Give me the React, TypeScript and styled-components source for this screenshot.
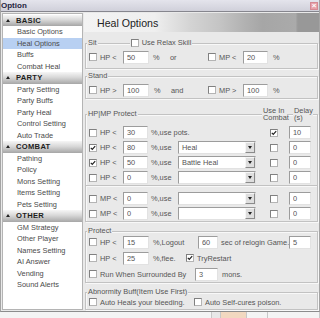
import React from "react";
import styled, { createGlobalStyle } from "styled-components";

const nav = [
  { title: "BASIC", items: ["Basic Options", "Heal Options", "Buffs", "Combat Heal"] },
  { title: "PARTY", items: ["Party Setting", "Party Buffs", "Party Heal", "Control Setting", "Auto Trade"] },
  { title: "COMBAT", items: ["Pathing", "Policy", "Mons Setting", "Items Setting", "Pets Setting"] },
  { title: "OTHER", items: ["GM Strategy", "Other Player", "Names Setting", "AI Answer", "Vending", "Sound Alerts"] },
];

type ProtectRow = { stat: string; on: boolean; value: string; skill?: string; combat: boolean; delay: string };

const hpRows: ProtectRow[] = [
  { stat: "HP", on: false, value: "30", combat: true, delay: "10" },
  { stat: "HP", on: true, value: "80", skill: "Heal", combat: false, delay: "0" },
  { stat: "HP", on: true, value: "50", skill: "Battle Heal", combat: false, delay: "0" },
  { stat: "HP", on: false, value: "0", skill: "", combat: false, delay: "0" },
];

const mpRows: ProtectRow[] = [
  { stat: "MP", on: false, value: "0", skill: "", combat: false, delay: "0" },
  { stat: "MP", on: false, value: "0", skill: "", combat: false, delay: "0" },
];

const GlobalStyle = createGlobalStyle`
  html, body { margin: 0; padding: 0; background: #f6f6f6; }
  body {
    font-family: "Liberation Sans", Arial, sans-serif;
    font-size: 7.4px;
    color: #555;
  }
`;

const Window = styled.div`
  width: 320px;
  height: 312px;
  box-sizing: border-box;
  display: flex;
  flex-direction: column;
  background: #e9e9e9;
  border-left: 1px solid #a4a4a4;
  border-right: 1px solid #a4a4a4;
  border-bottom: 1px solid #8c8c8c;
`;

const TitleBar = styled.div`
  height: 11px;
  flex: none;
  display: flex;
  align-items: center;
  justify-content: space-between;
  padding: 0 1px 0 0;
  background: linear-gradient(#e4e4ec, #d0d0da);
  border-bottom: 1px solid #86868e;
  font-size: 8px;
  font-weight: bold;
  color: #262640;
`;

const Close = styled.span`
  width: 8px;
  height: 8px;
  box-sizing: border-box;
  display: flex;
  align-items: center;
  justify-content: center;
  background: #e8a2aa;
  border: 1px solid #d48a94;
  color: #fff;
  font-size: 8px;
  line-height: 1;
`;

const Body = styled.div`
  flex: 1;
  display: flex;
  gap: 1px;
  padding: 1px 0 1px 1px;
  min-height: 0;
`;

const Sidebar = styled.div`
  width: 81px;
  box-sizing: border-box;
  flex: none;
  background: #fff;
  border: 1px solid #b4b4b4;
  padding-top: 0.5px;
`;

const SectionHead = styled.div`
  height: 11.5px;
  display: flex;
  align-items: center;
  padding-left: 3px;
  background: linear-gradient(#f6f6f6, #d8d8d8 45%, #a6a6a6);
  font-weight: bold;
  font-size: 7.6px;
  letter-spacing: 0.3px;
  color: #1e1e1e;
`;

const Arrow = styled.span`
  width: 0;
  height: 0;
  border-left: 2.5px solid transparent;
  border-right: 2.5px solid transparent;
  border-bottom: 3px solid #222;
  margin-right: 6px;
`;

const NavItem = styled.div<{ $active?: boolean }>`
  height: 11.5px;
  line-height: 11.5px;
  padding-left: 14px;
  background: ${(p) => (p.$active ? "#b8d0f2" : "transparent")};
  color: #4a4a4a;
  white-space: nowrap;
`;

const Panel = styled.div`
  flex: 1;
  display: flex;
  flex-direction: column;
  min-width: 0;
`;

const PanelHeader = styled.div`
  height: 19px;
  flex: none;
  display: flex;
  align-items: center;
  padding-left: 13px;
  font-size: 10.6px;
  color: #222;
  background: linear-gradient(
    to right,
    #f3f3f3 0%,
    #efefef 30%,
    #d4d4d4 45%,
    #c4c4c4 58%,
    #b2b2b2 68%,
    #a6a6a6 76%,
    #aaaaaa 90%,
    #989898 91%,
    #989898 100%
  );
`;

const Group = styled.div<{ $mt: number; $pb?: number }>`
  margin: ${(p) => p.$mt}px 1px 0 1px;
  border: 1px solid #c2c2c2;
  box-shadow: inset 1px 1px 0 #f8f8f8, 1px 1px 0 #f8f8f8;
  padding: 0 4px ${(p) => p.$pb ?? 0}px 3px;
`;

const GroupHead = styled.div<{ $h: number }>`
  height: ${(p) => p.$h}px;
  margin-top: ${(p) => -(p.$h / 2 + 1)}px;
  display: flex;
  align-items: center;
`;

const HeadLabel = styled.span<{ $ml?: number | "auto"; $w?: number }>`
  background: #e9e9e9;
  padding: 0 1px;
  margin-left: ${(p) => (p.$ml === "auto" ? "auto" : `${p.$ml ?? 0}px`)};
  ${(p) => (p.$w ? `width: ${p.$w}px; box-sizing: border-box;` : "")}
  display: flex;
  align-items: center;
  gap: 3px;
  white-space: nowrap;
  line-height: 7.5px;
`;

const Row = styled.div<{ $h: number; $mt?: number }>`
  height: ${(p) => p.$h}px;
  margin-top: ${(p) => p.$mt ?? 0}px;
  display: flex;
  align-items: center;
`;

const Cell = styled.span<{ $w?: number; $pl?: number }>`
  flex: none;
  ${(p) => (p.$w ? `width: ${p.$w}px;` : "")}
  padding-left: ${(p) => p.$pl ?? 0}px;
  box-sizing: border-box;
  white-space: nowrap;
  display: flex;
  align-items: center;
`;

const Spacer = styled.div<{ $h: number }>`
  height: ${(p) => p.$h}px;
`;

const Separator = styled.div`
  height: 1px;
  margin: 0 -4px 5px -3px;
  background: #c2c2c2;
  box-shadow: 0 1px 0 #f8f8f8;
`;

const Box = styled.span`
  width: 8px;
  height: 8px;
  box-sizing: border-box;
  flex: none;
  display: flex;
  align-items: center;
  justify-content: center;
  border: 1px solid;
  border-color: #808080 #b4b4b4 #b4b4b4 #808080;
  background: #fff;
`;

const Field = styled.input<{ $w: number }>`
  width: ${(p) => p.$w}px;
  height: 13px;
  box-sizing: border-box;
  margin: 0;
  padding: 0 0 0 3px;
  border: 1px solid;
  border-color: #9c9c9c #e2e2e2 #e2e2e2 #9c9c9c;
  background: #fff;
  font: inherit;
  color: #555;
  outline: none;
`;

const Select = styled.div<{ $w: number }>`
  width: ${(p) => p.$w}px;
  height: 13px;
  box-sizing: border-box;
  display: flex;
  align-items: center;
  justify-content: space-between;
  padding: 0 0 0 3px;
  border: 1px solid;
  border-color: #9c9c9c #e2e2e2 #e2e2e2 #9c9c9c;
  background: #fff;
  color: #555;
`;

const DropBtn = styled.span`
  width: 10px;
  height: 11px;
  box-sizing: border-box;
  display: flex;
  align-items: center;
  justify-content: center;
  border: 1px solid;
  border-color: #f6f6f6 #8a8a8a #8a8a8a #f6f6f6;
  background: #dedede;
  &::after {
    content: "";
    border-left: 2.5px solid transparent;
    border-right: 2.5px solid transparent;
    border-top: 3px solid #222;
  }
`;

const ColHead = styled.span`
  display: flex;
  flex-direction: column;
`;

const Footer = styled.div`
  height: 6px;
  display: flex;
  background: #f4f4f4;
`;

const FooterBlock = styled.span<{ $w: number; $bg: string }>`
  width: ${(p) => p.$w}px;
  background: ${(p) => p.$bg};
  border-right: 1px solid #c8c8c8;
`;

function Check({ on }: { on?: boolean }) {
  return (
    <Box>
      {on && (
        <svg width="6" height="6" viewBox="0 0 6 6">
          <path d="M0.8 2.8 L2.3 4.4 L5.2 1.1" fill="none" stroke="#222" strokeWidth="1.2" />
        </svg>
      )}
    </Box>
  );
}

function ProtectLine({ row }: { row: ProtectRow }) {
  return (
    <Row $h={15}>
      <Cell $w={11}>
        <Check on={row.on} />
      </Cell>
      <Cell $w={23}>{row.stat} &lt;</Cell>
      <Cell $w={25}>
        <Field $w={25} readOnly value={row.value} />
      </Cell>
      {row.skill === undefined ? (
        <Cell $w={122} $pl={3}>
          %,use pots.
        </Cell>
      ) : (
        <>
          <Cell $w={30} $pl={3}>
            %,use
          </Cell>
          <Cell $w={92}>
            <Select $w={78}>
              <span>{row.skill}</span>
              <DropBtn />
            </Select>
          </Cell>
        </>
      )}
      <Cell $w={19}>
        <Check on={row.combat} />
      </Cell>
      <Cell $w={22}>
        <Field $w={22} readOnly value={row.delay} />
      </Cell>
    </Row>
  );
}

export default function App() {
  return (
    <>
      <GlobalStyle />
      <Window>
        <TitleBar>
          <span>Option</span>
          <Close>×</Close>
        </TitleBar>
        <Body>
          <Sidebar>
            {nav.map((section) => (
              <div key={section.title}>
                <SectionHead>
                  <Arrow />
                  {section.title}
                </SectionHead>
                {section.items.map((item) => (
                  <NavItem key={item} $active={item === "Heal Options"}>
                    {item}
                  </NavItem>
                ))}
              </div>
            ))}
          </Sidebar>
          <Panel>
            <PanelHeader>Heal Options</PanelHeader>

            <Group $mt={11} $pb={4}>
              <GroupHead $h={10}>
                <HeadLabel $ml={-2}>Sit</HeadLabel>
                <HeadLabel $ml={32}>
                  <Check />
                  Use Relax Skill
                </HeadLabel>
              </GroupHead>
              <Row $h={14} $mt={2}>
                <Cell $w={11}>
                  <Check />
                </Cell>
                <Cell $w={23}>HP &lt;</Cell>
                <Cell $w={26}>
                  <Field $w={26} readOnly value="50" />
                </Cell>
                <Cell $w={21} $pl={4}>
                  %
                </Cell>
                <Cell $w={38}>or</Cell>
                <Cell $w={11}>
                  <Check />
                </Cell>
                <Cell $w={24}>MP &lt;</Cell>
                <Cell $w={25}>
                  <Field $w={25} readOnly value="20" />
                </Cell>
                <Cell $pl={5}>%</Cell>
              </Row>
            </Group>

            <Group $mt={7} $pb={1}>
              <GroupHead $h={10}>
                <HeadLabel $ml={-2}>Stand</HeadLabel>
              </GroupHead>
              <Row $h={14} $mt={2}>
                <Cell $w={11}>
                  <Check />
                </Cell>
                <Cell $w={23}>HP &gt;</Cell>
                <Cell $w={26}>
                  <Field $w={26} readOnly value="100" />
                </Cell>
                <Cell $w={22} $pl={5}>
                  %
                </Cell>
                <Cell $w={37}>and</Cell>
                <Cell $w={11}>
                  <Check />
                </Cell>
                <Cell $w={24}>MP &gt;</Cell>
                <Cell $w={25}>
                  <Field $w={25} readOnly value="100" />
                </Cell>
                <Cell $pl={5}>%</Cell>
              </Row>
            </Group>

            <Group $mt={15}>
              <GroupHead $h={16}>
                <HeadLabel $ml={-2}>HP|MP Protect</HeadLabel>
                <HeadLabel $ml="auto" $w={25}>
                  <ColHead>
                    <span>Use In</span>
                    <span>Combat</span>
                  </ColHead>
                </HeadLabel>
                <HeadLabel $ml={6} $w={20}>
                  <ColHead>
                    <span>Delay</span>
                    <span>(s)</span>
                  </ColHead>
                </HeadLabel>
              </GroupHead>
              <Spacer $h={3} />
              {hpRows.map((r, i) => (
                <ProtectLine key={i} row={r} />
              ))}
              <Separator />
              {mpRows.map((r, i) => (
                <ProtectLine key={i} row={r} />
              ))}
            </Group>

            <Group $mt={9}>
              <GroupHead $h={6}>
                <HeadLabel $ml={-2}>Protect</HeadLabel>
              </GroupHead>
              <Row $h={16}>
                <Cell $w={11}>
                  <Check />
                </Cell>
                <Cell $w={23}>HP &lt;</Cell>
                <Cell $w={26}>
                  <Field $w={26} readOnly value="15" />
                </Cell>
                <Cell $w={49} $pl={4}>
                  %,Logout
                </Cell>
                <Cell $w={20}>
                  <Field $w={20} readOnly value="60" />
                </Cell>
                <Cell $w={71} $pl={3}>
                  sec of relogin Game.
                </Cell>
                <Cell $w={22}>
                  <Field $w={22} readOnly value="5" />
                </Cell>
              </Row>
              <Row $h={16}>
                <Cell $w={11}>
                  <Check />
                </Cell>
                <Cell $w={23}>HP &lt;</Cell>
                <Cell $w={26}>
                  <Field $w={26} readOnly value="25" />
                </Cell>
                <Cell $w={37} $pl={4}>
                  %,flee.
                </Cell>
                <Cell $w={11}>
                  <Check on />
                </Cell>
                <Cell>TryRestart</Cell>
              </Row>
              <Row $h={16}>
                <Cell $w={11}>
                  <Check />
                </Cell>
                <Cell $w={95}>Run When Surrounded By</Cell>
                <Cell $w={23}>
                  <Field $w={23} readOnly value="3" />
                </Cell>
                <Cell $pl={4}>mons.</Cell>
              </Row>
            </Group>

            <Group $mt={9}>
              <GroupHead $h={6}>
                <HeadLabel $ml={-2}>Abnormity Buff(Item Use First)</HeadLabel>
              </GroupHead>
              <Row $h={14}>
                <Cell $w={11}>
                  <Check />
                </Cell>
                <Cell $w={94}>Auto Heals your bleeding.</Cell>
                <Cell $w={11}>
                  <Check />
                </Cell>
                <Cell>Auto Self-cures poison.</Cell>
              </Row>
            </Group>
          </Panel>
        </Body>
      </Window>
      <Footer>
        <FooterBlock $w={214} $bg="#f4f4f4" />
        <FooterBlock $w={8} $bg="#e8e8e8" />
        <FooterBlock $w={26} $bg="#f2d8c0" />
        <FooterBlock $w={20} $bg="#f4f4f4" />
        <FooterBlock $w={52} $bg="#f4f4f4" />
      </Footer>
    </>
  );
}
